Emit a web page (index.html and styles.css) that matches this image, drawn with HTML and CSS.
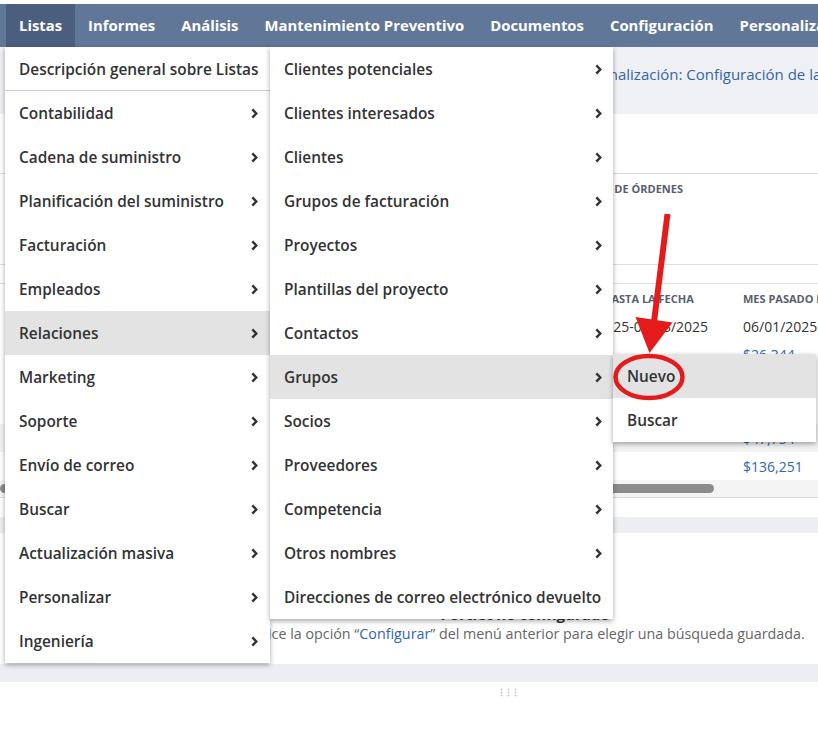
FILE: index.html
```html
<!DOCTYPE html>
<html lang="es">
<head>
<meta charset="utf-8">
<title>Listas</title>
<link rel="stylesheet" href="styles.css">
</head>
<body>
<div class="page">
  <div class="topgap"></div>
  <nav class="nav">
    <div class="nav-item active">Listas</div>
    <div class="nav-item">Informes</div>
    <div class="nav-item">Análisis</div>
    <div class="nav-item">Mantenimiento Preventivo</div>
    <div class="nav-item">Documentos</div>
    <div class="nav-item">Configuración</div>
    <div class="nav-item">Personalización</div>
  </nav>
  <div class="pagehead"><span class="crumb">Personalización: Configuración de la página principal</span></div>

  <section class="portlet p1">
    <div class="p1-title"></div>
    <div class="p1-chart"><div class="chart-label">NÚMERO DE ÓRDENES</div></div>
    <div class="p1-gap"></div>
    <div class="tr th">
      <div></div>
      <div class="c2">HASTA LA FECHA</div>
      <div class="c3">MES PASADO IMPORTE</div>
    </div>
    <div class="tr"><div></div><div class="c2v">01/01/2025-07/13/2025</div><div class="c3">06/01/2025</div></div>
    <div class="tr"><div></div><div></div><div class="c3 link">$26,344</div></div>
    <div class="tr"><div></div><div></div><div class="c3 link">$31,208</div></div>
    <div class="tr"><div></div><div></div><div class="c3 link">$12,950</div></div>
    <div class="tr alt"><div></div><div></div><div class="c3 link">$47,754</div></div>
    <div class="tr"><div></div><div></div><div class="c3 link">$136,251</div></div>
    <div class="scroll"><div class="thumb"></div></div>
    <div class="p1-foot"></div>
  </section>
  <div class="band"></div>
  <section class="portlet p2">
    <div class="msg-title">Portlet no configurado</div>
    <div class="msg">Utilice la opción “<span class="link">Configurar</span>” del menú anterior para elegir una búsqueda guardada.</div>
  </section>
  <div class="band band2"></div>
  <div class="handle">
    <svg width="17" height="9" viewBox="0 0 17 9" fill="#c8c8c8">
      <circle cx="1.5" cy="1.5" r="1"/><circle cx="1.5" cy="4.5" r="1"/><circle cx="1.5" cy="7.5" r="1"/>
      <circle cx="8.5" cy="1.5" r="1"/><circle cx="8.5" cy="4.5" r="1"/><circle cx="8.5" cy="7.5" r="1"/>
      <circle cx="15.5" cy="1.5" r="1"/><circle cx="15.5" cy="4.5" r="1"/><circle cx="15.5" cy="7.5" r="1"/>
    </svg>
  </div>
</div>

<div class="menu m1">
  <div class="mi sep">Descripción general sobre Listas</div>
  <div class="mi">Contabilidad<svg class="chev" viewBox="0 0 7 11"><path d="M1.3 1.3 L5.3 5.5 L1.3 9.7"/></svg></div>
  <div class="mi">Cadena de suministro<svg class="chev" viewBox="0 0 7 11"><path d="M1.3 1.3 L5.3 5.5 L1.3 9.7"/></svg></div>
  <div class="mi">Planificación del suministro<svg class="chev" viewBox="0 0 7 11"><path d="M1.3 1.3 L5.3 5.5 L1.3 9.7"/></svg></div>
  <div class="mi">Facturación<svg class="chev" viewBox="0 0 7 11"><path d="M1.3 1.3 L5.3 5.5 L1.3 9.7"/></svg></div>
  <div class="mi">Empleados<svg class="chev" viewBox="0 0 7 11"><path d="M1.3 1.3 L5.3 5.5 L1.3 9.7"/></svg></div>
  <div class="mi hl">Relaciones<svg class="chev" viewBox="0 0 7 11"><path d="M1.3 1.3 L5.3 5.5 L1.3 9.7"/></svg></div>
  <div class="mi">Marketing<svg class="chev" viewBox="0 0 7 11"><path d="M1.3 1.3 L5.3 5.5 L1.3 9.7"/></svg></div>
  <div class="mi">Soporte<svg class="chev" viewBox="0 0 7 11"><path d="M1.3 1.3 L5.3 5.5 L1.3 9.7"/></svg></div>
  <div class="mi">Envío de correo<svg class="chev" viewBox="0 0 7 11"><path d="M1.3 1.3 L5.3 5.5 L1.3 9.7"/></svg></div>
  <div class="mi">Buscar<svg class="chev" viewBox="0 0 7 11"><path d="M1.3 1.3 L5.3 5.5 L1.3 9.7"/></svg></div>
  <div class="mi">Actualización masiva<svg class="chev" viewBox="0 0 7 11"><path d="M1.3 1.3 L5.3 5.5 L1.3 9.7"/></svg></div>
  <div class="mi">Personalizar<svg class="chev" viewBox="0 0 7 11"><path d="M1.3 1.3 L5.3 5.5 L1.3 9.7"/></svg></div>
  <div class="mi">Ingeniería<svg class="chev" viewBox="0 0 7 11"><path d="M1.3 1.3 L5.3 5.5 L1.3 9.7"/></svg></div>
</div>

<div class="menu m2">
  <div class="mi">Clientes potenciales<svg class="chev" viewBox="0 0 7 11"><path d="M1.3 1.3 L5.3 5.5 L1.3 9.7"/></svg></div>
  <div class="mi">Clientes interesados<svg class="chev" viewBox="0 0 7 11"><path d="M1.3 1.3 L5.3 5.5 L1.3 9.7"/></svg></div>
  <div class="mi">Clientes<svg class="chev" viewBox="0 0 7 11"><path d="M1.3 1.3 L5.3 5.5 L1.3 9.7"/></svg></div>
  <div class="mi">Grupos de facturación<svg class="chev" viewBox="0 0 7 11"><path d="M1.3 1.3 L5.3 5.5 L1.3 9.7"/></svg></div>
  <div class="mi">Proyectos<svg class="chev" viewBox="0 0 7 11"><path d="M1.3 1.3 L5.3 5.5 L1.3 9.7"/></svg></div>
  <div class="mi">Plantillas del proyecto<svg class="chev" viewBox="0 0 7 11"><path d="M1.3 1.3 L5.3 5.5 L1.3 9.7"/></svg></div>
  <div class="mi">Contactos<svg class="chev" viewBox="0 0 7 11"><path d="M1.3 1.3 L5.3 5.5 L1.3 9.7"/></svg></div>
  <div class="mi hl">Grupos<svg class="chev" viewBox="0 0 7 11"><path d="M1.3 1.3 L5.3 5.5 L1.3 9.7"/></svg></div>
  <div class="mi">Socios<svg class="chev" viewBox="0 0 7 11"><path d="M1.3 1.3 L5.3 5.5 L1.3 9.7"/></svg></div>
  <div class="mi">Proveedores<svg class="chev" viewBox="0 0 7 11"><path d="M1.3 1.3 L5.3 5.5 L1.3 9.7"/></svg></div>
  <div class="mi">Competencia<svg class="chev" viewBox="0 0 7 11"><path d="M1.3 1.3 L5.3 5.5 L1.3 9.7"/></svg></div>
  <div class="mi">Otros nombres<svg class="chev" viewBox="0 0 7 11"><path d="M1.3 1.3 L5.3 5.5 L1.3 9.7"/></svg></div>
  <div class="mi">Direcciones de correo electrónico devuelto</div>
</div>

<div class="menu m3">
  <div class="mi hl">Nuevo</div>
  <div class="mi">Buscar</div>
</div>

<svg class="annot" width="818" height="731" viewBox="0 0 818 731">
  <line x1="667.5" y1="214" x2="654" y2="322" stroke="#e31b1b" stroke-width="6"/>
  <polygon points="635.5,317 672.5,322.5 649.5,353" fill="#e31b1b"/>
  <ellipse cx="649" cy="377" rx="33.5" ry="21" fill="none" stroke="#e31b1b" stroke-width="4.5"/>
</svg>
</body>
</html>
```

FILE: styles.css
```css
* { box-sizing: border-box; }

body {
  margin: 0;
  font-family: "Open Sans", "Noto Sans", sans-serif;
  background: #ffffff;
  position: relative;
  width: 818px;
  height: 731px;
  overflow: hidden;
}

.topgap { height: 4px; background: #ffffff; }

.nav {
  height: 43px;
  background: #607798;
  display: flex;
  padding-left: 6px;
  white-space: nowrap;
  overflow: hidden;
}
.nav-item {
  color: #ffffff;
  font-weight: 700;
  font-size: 14.85px;
  line-height: 20px;
  padding: 0 13px 2px;
  display: flex;
  align-items: center;
  flex-shrink: 0;
}
.nav-item.active { background: #4c5e7d; }

.pagehead {
  height: 67px;
  background: #eef0f4;
  padding: 17px 0 0 569px;
  font-size: 15px;
  line-height: 20px;
  color: #3464a6;
  white-space: nowrap;
  overflow: hidden;
}

.portlet { background: #ffffff; }
.p1 { height: 403px; overflow: hidden; }
.p1-title { height: 60px; border-bottom: 1px solid #dddddd; }
.p1-chart { height: 90px; padding-top: 8px; }
.chart-label {
  width: 683px;
  text-align: right;
  font-size: 11px;
  font-weight: 700;
  line-height: 14px;
  color: #58606d;
}
.p1-gap { height: 20px; border-top: 1px solid #dddddd; border-bottom: 1px solid #dddddd; }

.tr {
  display: grid;
  grid-template-columns: 555px 188px 1fr;
  height: 28px;
  align-items: center;
  font-size: 14px;
  color: #333333;
  white-space: nowrap;
  overflow: hidden;
}
.tr.alt { background: #f3f3f3; }
.th { font-size: 11px; font-weight: 700; color: #58606d; }
.th .c2 { padding-left: 48px; }
.link { color: #2f66ad; }

.scroll {
  height: 18px;
  background: #f4f4f4;
  border-bottom: 1px solid #dddddd;
  padding-top: 4px;
}
.thumb { width: 714px; height: 9px; border-radius: 5px; background: #8c8c8c; }
.p1-foot { height: 19px; }

.band { height: 16px; background: #eceef2; }
.band2 { height: 18px; }

.p2 {
  height: 131px;
  padding: 71px 0 0 232px;
  text-align: center;
}
.msg-title { font-size: 15px; font-weight: 700; line-height: 20px; color: #333333; }
.msg { font-size: 14.3px; line-height: 20px; color: #666666; white-space: nowrap; }

.handle { display: flex; padding: 6px 0 0 500px; }

.menu {
  position: absolute;
  background: #ffffff;
  box-shadow: 0 2px 5px rgba(0, 0, 0, 0.35);
}
.m1 { left: 5px; top: 47px; width: 265px; }
.m2 { left: 270px; top: 47px; width: 343px; }
.m3 { left: 613px; top: 354px; width: 203px; }

.mi {
  height: 44px;
  display: flex;
  align-items: center;
  justify-content: space-between;
  padding: 1px 12px 0 14px;
  font-size: 15.4px;
  font-weight: 600;
  color: #333333;
  white-space: nowrap;
}
.m2 .mi { padding-right: 11px; }
.mi.hl { background: #e3e3e3; }
.mi.sep { border-bottom: 1px solid #d0d0d0; }

.chev { width: 7px; height: 11px; flex-shrink: 0; }
.chev path { fill: none; stroke: #333333; stroke-width: 2.4; }

.annot { position: absolute; left: 0; top: 0; pointer-events: none; }
```
